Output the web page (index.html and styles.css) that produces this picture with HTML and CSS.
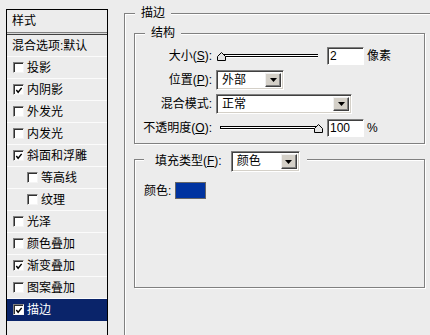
FILE: index.html
```html
<!DOCTYPE html>
<html lang="zh-CN">
<head>
<meta charset="utf-8">
<title>图层样式 - 描边</title>
<link rel="stylesheet" href="styles.css">
</head>
<body>
<div class="dialog">
  <div class="styles-list">
    <div class="list-head">样式</div>
    <div class="list-sep"></div>
    <div class="list-row plain">混合选项:默认</div>
    <div class="list-row"><span class="cb"></span>投影</div>
    <div class="list-row"><span class="cb"><svg viewBox="0 0 9 9" width="9" height="9"><path d="M1.5 4 L3.5 6.5 L7.5 1.5" fill="none" stroke="#000" stroke-width="1.6"/></svg></span>内阴影</div>
    <div class="list-row"><span class="cb"></span>外发光</div>
    <div class="list-row"><span class="cb"></span>内发光</div>
    <div class="list-row"><span class="cb"><svg viewBox="0 0 9 9" width="9" height="9"><path d="M1.5 4 L3.5 6.5 L7.5 1.5" fill="none" stroke="#000" stroke-width="1.6"/></svg></span>斜面和浮雕</div>
    <div class="list-row sub"><span class="cb"></span>等高线</div>
    <div class="list-row sub"><span class="cb"></span>纹理</div>
    <div class="list-row"><span class="cb"></span>光泽</div>
    <div class="list-row"><span class="cb"></span>颜色叠加</div>
    <div class="list-row"><span class="cb"><svg viewBox="0 0 9 9" width="9" height="9"><path d="M1.5 4 L3.5 6.5 L7.5 1.5" fill="none" stroke="#000" stroke-width="1.6"/></svg></span>渐变叠加</div>
    <div class="list-row"><span class="cb"></span>图案叠加</div>
    <div class="list-row selected"><span class="cb"><svg viewBox="0 0 9 9" width="9" height="9"><path d="M1.5 4 L3.5 6.5 L7.5 1.5" fill="none" stroke="#000" stroke-width="1.6"/></svg></span>描边</div>
  </div>

  <div class="main">
    <fieldset class="group outer">
      <legend class="cap">描边</legend>

      <fieldset class="group struct">
        <legend class="cap">结构</legend>
        <div class="form">
          <div class="label">大小(<u>S</u>):</div>
          <div class="ctl">
            <div class="slider"><div class="track"></div><svg class="thumb left" viewBox="0 0 9 9" width="9" height="9"><path d="M0.5 8.5 V4.5 L4.5 0.5 L8.5 4.5 V8.5 Z" fill="#e4e4e4" stroke="#000"/></svg></div>
            <div class="input">2</div>
            <span class="unit">像素</span>
          </div>

          <div class="label">位置(<u>P</u>):</div>
          <div class="ctl">
            <div class="combo w1"><span class="val">外部</span><span class="btn"><svg viewBox="0 0 7 4" width="7" height="4"><path d="M0 0 H7 L3.5 4 Z" fill="#000"/></svg></span></div>
          </div>

          <div class="label">混合模式:</div>
          <div class="ctl">
            <div class="combo w2"><span class="val">正常</span><span class="btn"><svg viewBox="0 0 7 4" width="7" height="4"><path d="M0 0 H7 L3.5 4 Z" fill="#000"/></svg></span></div>
          </div>

          <div class="label">不透明度(<u>O</u>):</div>
          <div class="ctl">
            <div class="slider"><div class="track"></div><svg class="thumb right" viewBox="0 0 9 9" width="9" height="9"><path d="M0.5 8.5 V4.5 L4.5 0.5 L8.5 4.5 V8.5 Z" fill="#e4e4e4" stroke="#000"/></svg></div>
            <div class="input">100</div>
            <span class="unit">%</span>
          </div>
        </div>
      </fieldset>

      <fieldset class="group fill">
        <legend class="fill-legend">
          <span class="fill-label">填充类型(<u>F</u>):</span>
          <span class="combo w3"><span class="val">颜色</span><span class="btn"><svg viewBox="0 0 7 4" width="7" height="4"><path d="M0 0 H7 L3.5 4 Z" fill="#000"/></svg></span></span>
        </legend>
        <div class="color-row">
          <span>颜色:</span>
          <span class="swatch"></span>
        </div>
      </fieldset>
    </fieldset>
  </div>
</div>
</body>
</html>
```

FILE: styles.css
```css
html, body {
  margin: 0;
  padding: 0;
}

body {
  width: 430px;
  height: 335px;
  overflow: hidden;
  background: #ececec;
  color: #000;
  font-family: "Liberation Sans", "Noto Sans CJK SC", sans-serif;
  font-size: 12px;
  line-height: 14px;
}

.dialog {
  display: flex;
  align-items: flex-start;
  height: 335px;
  overflow: hidden;
}

/* ---------- left styles list ---------- */
.styles-list {
  flex: none;
  width: 102px;
  height: 340px;
  box-sizing: border-box;
  margin: 9px 0 0 6px;
  border: 1px solid #000;
}

.list-head {
  height: 22px;
  line-height: 22px;
  padding-left: 5px;
}

.list-sep {
  height: 1px;
  background: #d8d8d8;
  border-top: 1px solid #808080;
  border-bottom: 1px solid #404040;
}

.list-row {
  display: flex;
  align-items: center;
  gap: 3px;
  height: 21px;
  padding-left: 6px;
  border-bottom: 1px solid #fbfbfb;
  white-space: nowrap;
}

.list-row.plain {
  padding-left: 5px;
}

.list-row.sub {
  padding-left: 20px;
}

.list-row.selected {
  background: #0a246a;
  color: #fff;
  border-bottom-color: #0a246a;
}

.cb {
  flex: none;
  display: flex;
  align-items: center;
  justify-content: center;
  width: 11px;
  height: 11px;
  box-sizing: border-box;
  background: #fff;
  border: 1px solid;
  border-color: #808080 #f4f4f4 #f4f4f4 #808080;
  box-shadow: inset 1px 1px 0 #303030;
}

.cb svg {
  margin: 1px 0 0 1px;
}

/* ---------- right side ---------- */
.main {
  flex: none;
  width: 330px;
  margin-left: 16px;
}

.group {
  margin: 0;
  min-width: 0;
  border: 1px solid #808080;
  box-shadow: inset 1px 1px 0 #fff, 1px 1px 0 #fff;
}

.cap {
  margin-left: 1px;
  padding: 0 6px;
  line-height: 14px;
  background: #ececec;
}

.outer {
  margin-top: 6px;
  padding: 6px 0 0 9px;
  height: 340px;
}

.struct {
  width: 291px;
  box-sizing: border-box;
  padding: 6px 0 5px 9px;
}

.form {
  display: grid;
  grid-template-columns: 68px auto;
  grid-auto-rows: 20px;
  column-gap: 4px;
  row-gap: 4px;
  align-items: center;
}

.label {
  justify-self: end;
  white-space: nowrap;
}

.ctl {
  display: flex;
  align-items: center;
}

.slider {
  position: relative;
  width: 106px;
  height: 9px;
  margin-left: 1px;
}

.track {
  margin: 2px 5px 0 3px;
  height: 1px;
  background: #fff;
  border-top: 1px solid #000;
  border-left: 1px solid #000;
  border-bottom: 1px solid #000;
  box-shadow: 0 1px 0 #fff;
}

.thumb {
  position: absolute;
  top: 0;
}

.thumb.left {
  left: 0;
}

.thumb.right {
  right: 0;
}

.input {
  width: 37px;
  height: 18px;
  box-sizing: border-box;
  margin-left: 4px;
  padding-left: 2px;
  line-height: 16px;
  background: #fff;
  border: 1px solid;
  border-color: #808080 #fff #fff #808080;
  box-shadow: inset 1px 1px 0 #404040;
}

.unit {
  margin-left: 3px;
}

.combo {
  display: flex;
  align-items: stretch;
  height: 20px;
  box-sizing: border-box;
  padding: 2px;
  background: #fff;
  border: 1px solid;
  border-color: #808080 #fff #fff #808080;
  box-shadow: inset 1px 1px 0 #404040, inset -1px -1px 0 #d4d0c8;
}

.combo.w1 {
  width: 68px;
}

.combo.w2 {
  width: 136px;
}

.combo.w3 {
  width: 69px;
  height: 21px;
  margin-bottom: -4px;
}

.val {
  flex: 1;
  padding-left: 3px;
  line-height: 15px;
}

.btn {
  flex: none;
  display: flex;
  align-items: center;
  justify-content: center;
  width: 16px;
  box-sizing: border-box;
  background: #d4d0c8;
  border: 1px solid;
  border-color: #f0f0f0 #404040 #404040 #f0f0f0;
  box-shadow: inset -1px -1px 0 #808080;
}

.fill {
  width: 291px;
  box-sizing: border-box;
  margin-top: 7px;
  padding: 14px 0 88px 9px;
}

.fill-legend {
  display: flex;
  align-items: flex-start;
  gap: 9px;
  padding: 0 7px 0 11px;
  background: #ececec;
}

.fill-label {
  margin-top: 3px;
}

.color-row {
  display: flex;
  align-items: center;
  gap: 4px;
}

.swatch {
  width: 31px;
  height: 17px;
  box-sizing: border-box;
  background: #0033a0;
  border: 1px solid #666;
}
```
